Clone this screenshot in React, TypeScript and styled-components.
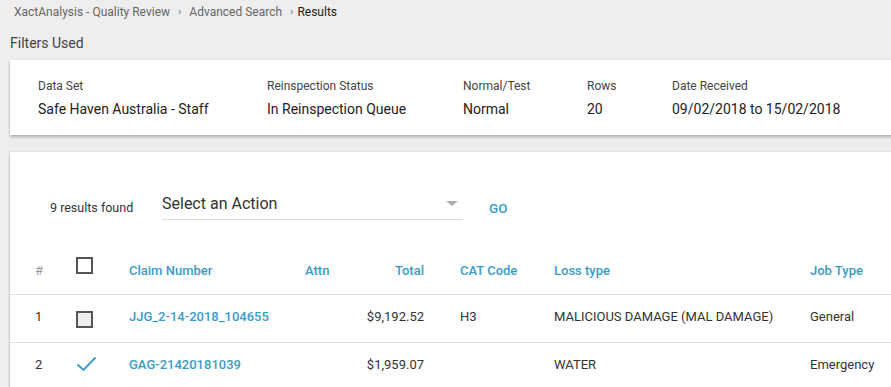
import React from 'react'
import styled, { createGlobalStyle } from 'styled-components'

const GlobalStyle = createGlobalStyle`
  html, body {
    margin: 0;
    padding: 0;
    background: #eeeeee;
    font-family: Roboto, "Noto Sans", Arial, sans-serif;
    color: #333;
    overflow: hidden;
  }
`

const BLUE = '#3a9bc9'

const Page = styled.div`
  width: 891px;
  height: 387px;
  padding-left: 10px;
  box-sizing: border-box;
  overflow: hidden;
`
const Crumbs = styled.div`
  display: flex;
  align-items: center;
  height: 23px;
  padding-left: 4px;
  font-size: 12px;
  color: #666;
`
const Crumb = styled.span<{ $current?: boolean }>`
  color: ${p => (p.$current ? '#222' : '#666')};
`
const Sep = styled.span<{ $tight?: boolean }>`
  margin: 0 ${p => (p.$tight ? 4 : 8)}px 0 8px;
  font-size: 11px;
  color: #777;
`
const Heading = styled.div`
  height: 37px;
  line-height: 40px;
  font-size: 14px;
  color: #444;
`
const Card = styled.div`
  background: #fff;
  margin-right: -20px;
  box-shadow: 0 2px 3px rgba(0, 0, 0, 0.25), 0 0 2px rgba(0, 0, 0, 0.08);
`
const FilterCard = styled(Card)`
  display: flex;
  height: 75px;
  padding: 17px 0 0 28px;
  box-sizing: border-box;
`
const Filter = styled.div<{ $w: number }>`
  width: ${p => p.$w}px;
  display: flex;
  flex-direction: column;
`
const FilterLabel = styled.div`
  font-size: 12px;
  color: #444;
  line-height: 18px;
`
const FilterValue = styled.div`
  font-size: 14px;
  color: #222;
  line-height: 28px;
`
const ResultsCard = styled(Card)`
  margin-top: 17px;
  height: 260px;
`
const Toolbar = styled.div`
  display: flex;
  align-items: center;
  height: 36px;
  padding: 36px 0 0 40px;
`
const Count = styled.span`
  font-size: 12.5px;
  color: #333;
  width: 112px;
  padding-top: 2px;
`
const Select = styled.div`
  position: relative;
  width: 301px;
  height: 28px;
  border-bottom: 1px solid #dcdcdc;
  font-size: 16px;
  color: #333;
  line-height: 23px;
  box-sizing: border-box;
`
const Caret = styled.span`
  position: absolute;
  right: 5px;
  top: 9px;
  width: 0;
  height: 0;
  border-left: 6px solid transparent;
  border-right: 6px solid transparent;
  border-top: 5px solid #b0b0b0;
`
const Go = styled.span`
  margin-left: 26px;
  padding-top: 4px;
  font-size: 13.5px;
  font-weight: 500;
  color: ${BLUE};
`
const Row = styled.div<{ $head?: boolean }>`
  display: grid;
  grid-template-columns: 41px 53px 176px 40px 79px 130px 256px 1fr;
  align-items: center;
  height: ${p => (p.$head ? 52 : 48)}px;
  padding-left: 25px;
  padding-bottom: ${p => (p.$head ? 0 : 5)}px;
  box-sizing: border-box;
  border-bottom: 1px solid #e2e2e2;
  margin-top: ${p => (p.$head ? 19 : 0)}px;
  font-size: 13px;
  color: #333;
`
const Head = styled.div<{ $right?: boolean; $pad?: number; $muted?: boolean }>`
  color: ${p => (p.$muted ? '#999' : BLUE)};
  font-weight: ${p => (p.$muted ? 400 : 500)};
  text-align: ${p => (p.$right ? 'right' : 'left')};
  padding-left: ${p => p.$pad ?? 0}px;
  padding-top: 4px;
`
const Cell = styled.div<{ $right?: boolean; $pad?: number; $link?: boolean }>`
  text-align: ${p => (p.$right ? 'right' : 'left')};
  padding-left: ${p => p.$pad ?? 0}px;
  color: ${p => (p.$link ? BLUE : '#333')};
  font-weight: ${p => (p.$link ? 500 : 400)};
  white-space: nowrap;
`
const Box = styled.span<{ $fill?: boolean; $up?: number }>`
  display: block;
  width: 17px;
  height: 17px;
  box-sizing: border-box;
  border: 2px solid #555;
  background: ${p => (p.$fill ? '#eeeeee' : '#fff')};
  margin-top: ${p => -(p.$up ?? 0)}px;
`

const Check = () => (
  <svg width="21" height="16" viewBox="0 0 21 16" style={{ display: 'block' }}>
    <path d="M1.5 8.5 L7.5 14 L19.5 1.5" fill="none" stroke={BLUE} strokeWidth="1.9" />
  </svg>
)

const filters = [
  { label: 'Data Set', value: 'Safe Haven Australia - Staff', w: 229 },
  { label: 'Reinspection Status', value: 'In Reinspection Queue', w: 196 },
  { label: 'Normal/Test', value: 'Normal', w: 124 },
  { label: 'Rows', value: '20', w: 85 },
  { label: 'Date Received', value: '09/02/2018 to 15/02/2018', w: 220 },
]

const rows = [
  { n: 1, claim: 'JJG_2-14-2018_104655', total: '$9,192.52', cat: 'H3', loss: 'MALICIOUS DAMAGE (MAL DAMAGE)', job: 'General', checked: false },
  { n: 2, claim: 'GAG-21420181039', total: '$1,959.07', cat: '', loss: 'WATER', job: 'Emergency', checked: true },
]

export default function App() {
  return (
    <>
      <GlobalStyle />
      <Page>
        <Crumbs>
          <Crumb>XactAnalysis - Quality Review</Crumb>
          <Sep>›</Sep>
          <Crumb>Advanced Search</Crumb>
          <Sep $tight>›</Sep>
          <Crumb $current>Results</Crumb>
        </Crumbs>
        <Heading>Filters Used</Heading>
        <FilterCard>
          {filters.map(f => (
            <Filter key={f.label} $w={f.w}>
              <FilterLabel>{f.label}</FilterLabel>
              <FilterValue>{f.value}</FilterValue>
            </Filter>
          ))}
        </FilterCard>
        <ResultsCard>
          <Toolbar>
            <Count>9 results found</Count>
            <Select>
              Select an Action
              <Caret />
            </Select>
            <Go>GO</Go>
          </Toolbar>
          <Row $head>
            <Head $muted>#</Head>
            <div><Box $up={6} /></div>
            <Head>Claim Number</Head>
            <Head>Attn</Head>
            <Head $right>Total</Head>
            <Head $pad={36}>CAT Code</Head>
            <Head>Loss type</Head>
            <Head>Job Type</Head>
          </Row>
          {rows.map(r => (
            <Row key={r.n}>
              <Cell>{r.n}</Cell>
              <div>{r.checked ? <Check /> : <Box $fill $up={-6} />}</div>
              <Cell $link>{r.claim}</Cell>
              <Cell />
              <Cell $right>{r.total}</Cell>
              <Cell $pad={36}>{r.cat}</Cell>
              <Cell>{r.loss}</Cell>
              <Cell>{r.job}</Cell>
            </Row>
          ))}
        </ResultsCard>
      </Page>
    </>
  )
}
